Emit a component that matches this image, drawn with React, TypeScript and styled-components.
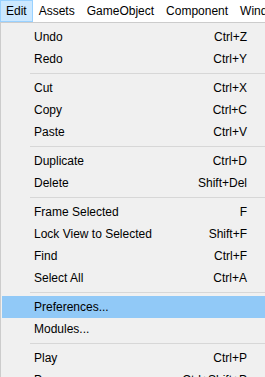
import styled, { createGlobalStyle } from "styled-components";

const GlobalStyle = createGlobalStyle`
  html, body {
    margin: 0;
    padding: 0;
    background: #ffffff;
    overflow: hidden;
  }
  body {
    font-family: "Liberation Sans", Arial, sans-serif;
    font-size: 12px;
    color: #000000;
  }
`;

const Screen = styled.div`
  width: 265px;
  height: 377px;
  overflow: hidden;
  display: flex;
  flex-direction: column;
`;

const MenuBar = styled.ul`
  list-style: none;
  margin: 0;
  padding: 0;
  height: 22px;
  flex-shrink: 0;
  display: flex;
  align-items: stretch;
  background: #ffffff;
  white-space: nowrap;
`;

const MenuBarItem = styled.li<{ $active?: boolean }>`
  display: flex;
  align-items: center;
  padding: 0 5px;
  border: 1px solid ${({ $active }) => ($active ? "#99d1ff" : "transparent")};
  background: ${({ $active }) => ($active ? "#cce8ff" : "transparent")};
`;

const Dropdown = styled.ul`
  list-style: none;
  margin: 0;
  padding: 3px 0 0 1px;
  flex: 1;
  background: #f0f0f0;
  border-top: 1px solid #cccccc;
  border-left: 1px solid #cccccc;
`;

const MenuItem = styled.li<{ $highlighted?: boolean }>`
  height: 22px;
  display: flex;
  align-items: center;
  justify-content: space-between;
  padding: 0 18px 0 32px;
  background: ${({ $highlighted }) => ($highlighted ? "#91c9f7" : "transparent")};
  white-space: nowrap;
`;

const Label = styled.span``;

const Shortcut = styled.span`
  text-align: right;
`;

const Separator = styled.li`
  height: 7px;
  display: flex;
  align-items: center;
  padding-left: 28px;

  &::after {
    content: "";
    flex: 1;
    height: 1px;
    background: #d7d7d7;
  }
`;

type Entry =
  | { label: string; shortcut?: string; highlighted?: boolean }
  | "sep";

const entries: Entry[] = [
  { label: "Undo", shortcut: "Ctrl+Z" },
  { label: "Redo", shortcut: "Ctrl+Y" },
  "sep",
  { label: "Cut", shortcut: "Ctrl+X" },
  { label: "Copy", shortcut: "Ctrl+C" },
  { label: "Paste", shortcut: "Ctrl+V" },
  "sep",
  { label: "Duplicate", shortcut: "Ctrl+D" },
  { label: "Delete", shortcut: "Shift+Del" },
  "sep",
  { label: "Frame Selected", shortcut: "F" },
  { label: "Lock View to Selected", shortcut: "Shift+F" },
  { label: "Find", shortcut: "Ctrl+F" },
  { label: "Select All", shortcut: "Ctrl+A" },
  "sep",
  { label: "Preferences...", highlighted: true },
  { label: "Modules..." },
  "sep",
  { label: "Play", shortcut: "Ctrl+P" },
  { label: "Pause", shortcut: "Ctrl+Shift+P" },
];

const menus = ["Edit", "Assets", "GameObject", "Component", "Window"];

const App = () => {
  return (
    <Screen>
      <GlobalStyle />
      <MenuBar>
        {menus.map((name) => (
          <MenuBarItem key={name} $active={name === "Edit"}>
            {name}
          </MenuBarItem>
        ))}
      </MenuBar>
      <Dropdown>
        {entries.map((entry, i) =>
          entry === "sep" ? (
            <Separator key={i} />
          ) : (
            <MenuItem key={i} $highlighted={entry.highlighted}>
              <Label>{entry.label}</Label>
              {entry.shortcut && <Shortcut>{entry.shortcut}</Shortcut>}
            </MenuItem>
          )
        )}
      </Dropdown>
    </Screen>
  );
};

export default App;
